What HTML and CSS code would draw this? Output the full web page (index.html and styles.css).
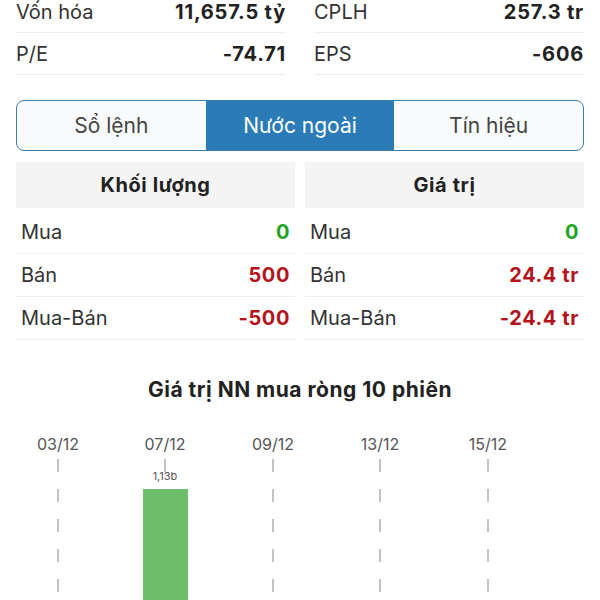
FILE: index.html
```html
<!DOCTYPE html>
<html lang="vi">
<head>
    <meta charset="UTF-8">
    <meta name="viewport" content="width=device-width, initial-scale=1.0">
    <title>Nước ngoài</title>
    <link rel="stylesheet" href="styles.css">
</head>
<body>
    <div class="stats">
        <div class="stat-row"><span>Vốn hóa</span><b>11,657.5 tỷ</b></div>
        <div class="stat-row"><span>CPLH</span><b>257.3 tr</b></div>
        <div class="stat-row"><span>P/E</span><b>-74.71</b></div>
        <div class="stat-row"><span>EPS</span><b>-606</b></div>
    </div>

    <div class="tabs">
        <div class="tab">Sổ lệnh</div>
        <div class="tab active">Nước ngoài</div>
        <div class="tab">Tín hiệu</div>
    </div>

    <div class="foreign">
        <div class="foreign-col">
            <div class="col-header">Khối lượng</div>
            <div class="row"><span>Mua</span><b class="up">0</b></div>
            <div class="row"><span>Bán</span><b class="down">500</b></div>
            <div class="row"><span>Mua-Bán</span><b class="down">-500</b></div>
        </div>
        <div class="foreign-col">
            <div class="col-header">Giá trị</div>
            <div class="row"><span>Mua</span><b class="up">0</b></div>
            <div class="row"><span>Bán</span><b class="down">24.4 tr</b></div>
            <div class="row"><span>Mua-Bán</span><b class="down">-24.4 tr</b></div>
        </div>
    </div>

    <h2 class="chart-title">Giá trị NN mua ròng 10 phiên</h2>

    <svg class="chart" width="600" height="172" viewBox="0 0 600 172">
        <g class="grid">
            <line x1="58" y1="30" x2="58" y2="172"/>
            <line x1="165" y1="30" x2="165" y2="172"/>
            <line x1="273" y1="30" x2="273" y2="172"/>
            <line x1="380" y1="30" x2="380" y2="172"/>
            <line x1="488" y1="30" x2="488" y2="172"/>
        </g>
        <g class="dates">
            <text x="58" y="21">03/12</text>
            <text x="165" y="21">07/12</text>
            <text x="273" y="21">09/12</text>
            <text x="380" y="21">13/12</text>
            <text x="488" y="21">15/12</text>
        </g>
        <rect class="bar" x="143" y="60" width="45" height="112"/>
        <text class="bar-label" x="165" y="51">1,13b</text>
    </svg>
</body>
</html>
```

FILE: styles.css
```css
body {
    margin: 0;
    padding: 0;
    font-family: Inter, "Noto Sans", sans-serif;
    background: #fff;
    color: #222;
    overflow: hidden;
}

.stats {
    display: grid;
    grid-template-columns: 1fr 1fr;
    column-gap: 28px;
    padding: 0 16px;
    margin-top: -9px;
}

.stat-row {
    display: flex;
    justify-content: space-between;
    align-items: center;
    height: 41px;
    border-bottom: 1px solid #efefef;
    font-size: 20px;
}

.stat-row span {
    color: #333;
}

.stat-row b {
    color: #222;
    letter-spacing: 0.8px;
}

.tabs {
    display: flex;
    margin: 25px 16px 0;
    height: 49px;
    border: 1.5px solid #3a7fb4;
    border-radius: 8px;
    overflow: hidden;
    background: #f8fafb;
}

.tab {
    flex: 1;
    display: flex;
    justify-content: center;
    align-items: center;
    font-size: 21px;
    color: #444;
}

.tab.active {
    background: #2b7bb7;
    color: #fff;
}

.foreign {
    display: flex;
    gap: 10px;
    margin: 11px 16px 0;
}

.foreign-col {
    flex: 1;
}

.col-header {
    height: 46px;
    line-height: 46px;
    background: #f4f4f4;
    text-align: center;
    font-size: 20px;
    font-weight: bold;
    letter-spacing: 0.6px;
    color: #222;
    margin-bottom: 3px;
}

.row {
    display: flex;
    justify-content: space-between;
    align-items: center;
    height: 42px;
    padding: 0 5px;
    border-bottom: 1px solid #f0f0f0;
    font-size: 20px;
}

.row span {
    color: #333;
}

.row b {
    letter-spacing: 0.6px;
}

.up {
    color: #22a422;
}

.down {
    color: #b3141c;
}

.chart-title {
    margin: 38px 0 0;
    text-align: center;
    font-size: 21px;
    line-height: 24px;
    font-weight: bold;
    letter-spacing: 0.5px;
    color: #222;
}

.chart {
    display: block;
    margin-top: 27px;
}

.grid line {
    stroke: #b0b0b0;
    stroke-width: 1.5;
    stroke-dasharray: 13 17;
}

.dates text {
    font-family: Inter, "Noto Sans", sans-serif;
    font-size: 16px;
    fill: #555;
    text-anchor: middle;
}

.bar {
    fill: #6cbe6a;
}

.bar-label {
    font-family: Inter, "Noto Sans", sans-serif;
    font-size: 11px;
    fill: #555;
    text-anchor: middle;
}
```
